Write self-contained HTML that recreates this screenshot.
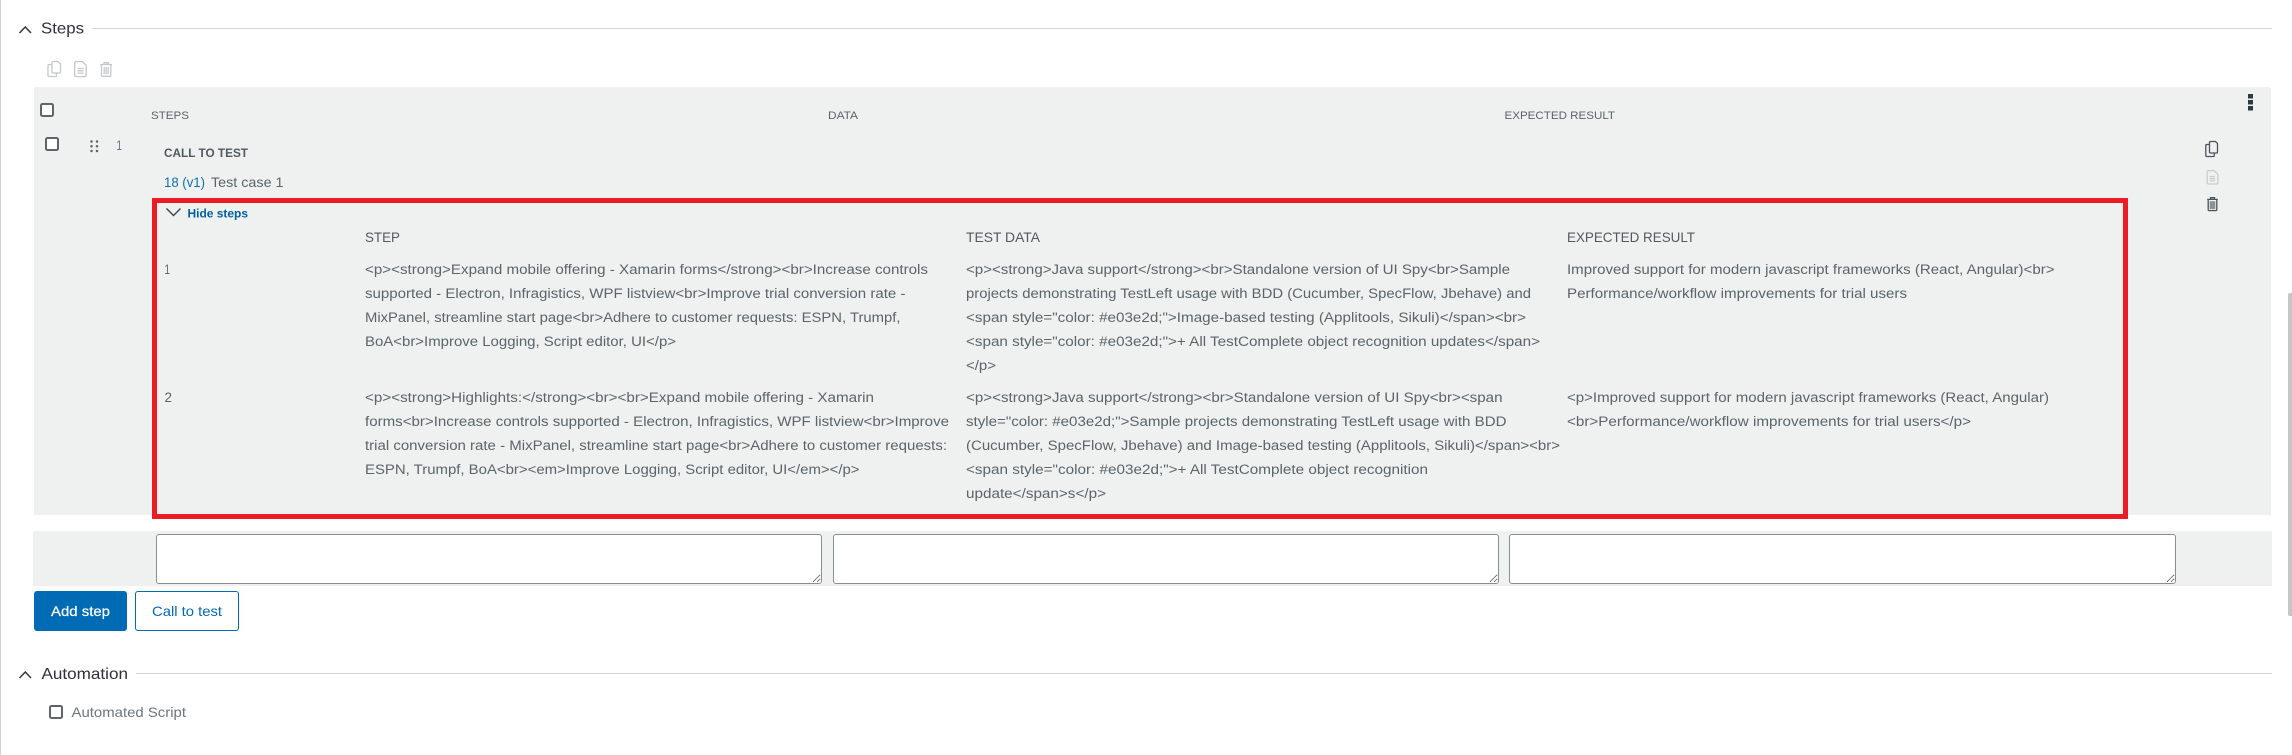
<!DOCTYPE html>
<html lang="en">
<head>
<meta charset="utf-8">
<title>Steps</title>
<style>
html,body{margin:0;padding:0;background:#fff;width:2292px;height:755px;overflow:hidden;font-family:"Liberation Sans",sans-serif}
.abs{position:absolute;box-sizing:border-box}
textarea{position:absolute;box-sizing:border-box;border:1px solid #868f94;border-bottom-width:1.5px;border-radius:3px;background:#fff;margin:0;padding:0;outline:none}
svg{position:absolute;left:0;top:0}
text{font-family:"Liberation Sans",sans-serif}
.b{font-size:13.5px;fill:#5a646a}
.h{font-size:13.6px;fill:#4f595f}
.s{font-size:11.2px;fill:#5a646a}
</style>
</head>
<body>
<div class="abs" style="left:0;top:0;width:1px;height:755px;background:#cfd2d4"></div>
<div class="abs" style="left:92px;top:28px;width:2180px;height:1px;background:#d3d6d8"></div>
<div class="abs" style="left:136px;top:673px;width:2136px;height:1px;background:#d3d6d8"></div>
<div class="abs" style="left:34px;top:87px;width:2237px;height:428px;background:#eff1f1;border-radius:2px 3px 0 0"></div>
<div class="abs" style="left:33px;top:531px;width:2239px;height:55px;background:#eff1f1"></div>
<textarea style="left:156px;top:534px;width:666px;height:50px"></textarea>
<textarea style="left:833px;top:534px;width:666px;height:50px"></textarea>
<textarea style="left:1509px;top:534px;width:667px;height:50px"></textarea>
<div class="abs" style="left:34px;top:591px;width:93px;height:40px;background:#006bb5;border-radius:3px"></div>
<div class="abs" style="left:135px;top:591px;width:104px;height:40px;background:#fff;border:1px solid #006bb5;border-radius:3px"></div>
<div class="abs" style="left:152px;top:198px;width:1976px;height:321px;border:5px solid #ed1c24"></div>
<div class="abs" style="left:2288px;top:293px;width:4px;height:323px;background:#c6c6c6;border-radius:2px 0 0 2px"></div>

<svg width="2292" height="755" viewBox="0 0 2292 755" xmlns="http://www.w3.org/2000/svg">
<!-- section chevrons -->
<path d="M19.5 33L25.3 27L31 33" fill="none" stroke="#2f3a40" stroke-width="1.5"/>
<path d="M19.5 678L25.3 672L31 678" fill="none" stroke="#2f3a40" stroke-width="1.5"/>
<text x="41" y="33.5" font-size="16" fill="#2a3338" textLength="43" lengthAdjust="spacingAndGlyphs">Steps</text>
<text x="41.5" y="679" font-size="16" fill="#2a3338" textLength="86.5" lengthAdjust="spacingAndGlyphs">Automation</text>

<!-- top icons -->
<g fill="none" stroke="#c4c8ca" stroke-width="1.3">
<g transform="translate(47,61)">
<path d="M5 1.5a1 1 0 0 1 1-1h5l2.5 2.5v8a1 1 0 0 1-1 1H6a1 1 0 0 1-1-1z"/>
<path d="M5 3.5H2a1 1 0 0 0-1 1v10a1 1 0 0 0 1 1h6.5a1 1 0 0 0 1-1V12"/>
</g>
<g transform="translate(74,61)">
<path d="M.7 2A1.5 1.5 0 0 1 2.2.6h6l4 3.5v10a1.5 1.5 0 0 1-1.5 1.5H2.200A1.5 1.5 0 0 1 .7 14.100z"/>
<path d="M3.5 7.5h6M3.5 9.8h6M3.5 12.1h6"/>
</g>
<g transform="translate(100,62)">
<path d="M.3 2.5H12M4 2.5V.7h4.300v1.800"/>
<path d="M1.500 2.500v10.800a1 1 0 0 0 1 1h7.300a1 1 0 0 0 1-1V2.500"/>
<path d="M4.200 5v7M6.200 5v7M8.200 5v7"/>
</g>
</g>

<!-- checkboxes -->
<rect x="41" y="104" width="12" height="12" rx="1.5" fill="#fff" stroke="#5b656b" stroke-width="2"/>
<rect x="46" y="138" width="12" height="12" rx="1.5" fill="#fff" stroke="#5b656b" stroke-width="2"/>
<rect x="50" y="706" width="12" height="12" rx="1.5" fill="#fff" stroke="#5b656b" stroke-width="2"/>

<!-- drag handle -->
<g fill="#5b656b">
<circle cx="91.5" cy="141.5" r="1.25"/><circle cx="97" cy="141.5" r="1.25"/>
<circle cx="91.5" cy="146.3" r="1.25"/><circle cx="97" cy="146.3" r="1.25"/>
<circle cx="91.5" cy="151" r="1.25"/><circle cx="97" cy="151" r="1.25"/>
</g>

<!-- panel header -->
<text class="s" x="151" y="119" textLength="38" lengthAdjust="spacingAndGlyphs">STEPS</text>
<text class="s" x="828" y="119" textLength="30" lengthAdjust="spacingAndGlyphs">DATA</text>
<text class="s" x="1504.5" y="119" textLength="110.5" lengthAdjust="spacingAndGlyphs">EXPECTED RESULT</text>

<!-- kebab -->
<g fill="#2f3a40">
<rect x="2248" y="94" width="5" height="4.5"/>
<rect x="2248" y="100" width="5" height="4.5"/>
<rect x="2248" y="106" width="5" height="4.5"/>
</g>

<!-- row -->
<text x="116.500" y="150" font-size="14" fill="#56758a" textLength="5.5" lengthAdjust="spacingAndGlyphs">1</text>
<text x="164" y="157" font-size="11.5" font-weight="700" fill="#4f595f" textLength="84" lengthAdjust="spacingAndGlyphs">CALL TO TEST</text>
<text x="164" y="187" font-size="14" fill="#0f6fb0" textLength="41" lengthAdjust="spacingAndGlyphs">18 (v1)</text>
<text x="211" y="187" font-size="14" fill="#5a646a" textLength="72.5" lengthAdjust="spacingAndGlyphs">Test case 1</text>

<!-- right icons -->
<g fill="none" stroke="#4a545a" stroke-width="1.3">
<g transform="translate(2205,141)">
<path d="M4.5 1.500a1 1 0 0 1 1-1h5l2 2V11a1 1 0 0 1-1 1H5.500a1 1 0 0 1-1-1z"/>
<path d="M4.5 3.500H1.800a1 1 0 0 0-1 1v10a1 1 0 0 0 1 1h6.500a1 1 0 0 0 1-1V12"/>
</g>
<g transform="translate(2206.5,170)" stroke="#c8cccd">
<path d="M.7 1.800A1.300 1.300 0 0 1 2 .6h5.500l3.800 3.400v8.700a1.300 1.300 0 0 1-1.300 1.300H2A1.300 1.300 0 0 1 .7 12.700z"/>
<path d="M3 6.500h5.500M3 8.700h5.500M3 10.900h5.500"/>
</g>
<g transform="translate(2207,197)">
<path d="M.2 2.400h10.600M3.500 2.400V.7h4v1.700"/>
<path d="M1.200 2.400v10.200a1 1 0 0 0 1 1h6.600a1 1 0 0 0 1-1V2.400"/>
<rect x="2.700" y="4.200" width="5.600" height="8" fill="#8b9296" stroke="none"/>
</g>
</g>

<!-- hide steps -->
<path d="M166.500 208.500L173.500 215.500L180.500 208.500" fill="none" stroke="#3a454b" stroke-width="1.4"/>
<text x="187.5" y="217.3" font-size="12" font-weight="700" fill="#00609f" textLength="60.5" lengthAdjust="spacingAndGlyphs">Hide steps</text>

<!-- nested headers -->
<text class="h" x="365" y="242" textLength="35" lengthAdjust="spacingAndGlyphs">STEP</text>
<text class="h" x="966" y="242" textLength="74" lengthAdjust="spacingAndGlyphs">TEST DATA</text>
<text class="h" x="1567" y="242" textLength="128" lengthAdjust="spacingAndGlyphs">EXPECTED RESULT</text>

<!-- row 1 -->
<text class="b" x="164.5" y="274" textLength="5.5" lengthAdjust="spacingAndGlyphs">1</text>
<text class="b" x="365" y="274" textLength="563" lengthAdjust="spacingAndGlyphs">&lt;p&gt;&lt;strong&gt;Expand mobile offering - Xamarin forms&lt;/strong&gt;&lt;br&gt;Increase controls</text>
<text class="b" x="365" y="298" textLength="540.5" lengthAdjust="spacingAndGlyphs">supported - Electron, Infragistics, WPF listview&lt;br&gt;Improve trial conversion rate -</text>
<text class="b" x="365" y="322" textLength="535.5" lengthAdjust="spacingAndGlyphs">MixPanel, streamline start page&lt;br&gt;Adhere to customer requests: ESPN, Trumpf,</text>
<text class="b" x="365" y="346" textLength="311" lengthAdjust="spacingAndGlyphs">BoA&lt;br&gt;Improve Logging, Script editor, UI&lt;/p&gt;</text>

<text class="b" x="966" y="274" textLength="544" lengthAdjust="spacingAndGlyphs">&lt;p&gt;&lt;strong&gt;Java support&lt;/strong&gt;&lt;br&gt;Standalone version of UI Spy&lt;br&gt;Sample</text>
<text class="b" x="966" y="298" textLength="565" lengthAdjust="spacingAndGlyphs">projects demonstrating TestLeft usage with BDD (Cucumber, SpecFlow, Jbehave) and</text>
<text class="b" x="966" y="322" textLength="560" lengthAdjust="spacingAndGlyphs">&lt;span style="color: #e03e2d;"&gt;Image-based testing (Applitools, Sikuli)&lt;/span&gt;&lt;br&gt;</text>
<text class="b" x="966" y="346" textLength="574" lengthAdjust="spacingAndGlyphs">&lt;span style="color: #e03e2d;"&gt;+ All TestComplete object recognition updates&lt;/span&gt;</text>
<text class="b" x="966" y="370" textLength="30" lengthAdjust="spacingAndGlyphs">&lt;/p&gt;</text>

<text class="b" x="1567" y="274" textLength="487.5" lengthAdjust="spacingAndGlyphs">Improved support for modern javascript frameworks (React, Angular)&lt;br&gt;</text>
<text class="b" x="1567" y="298" textLength="340" lengthAdjust="spacingAndGlyphs">Performance/workflow improvements for trial users</text>

<!-- row 2 -->
<text class="b" x="164.5" y="402" textLength="7.5" lengthAdjust="spacingAndGlyphs">2</text>
<text class="b" x="365" y="402" textLength="509" lengthAdjust="spacingAndGlyphs">&lt;p&gt;&lt;strong&gt;Highlights:&lt;/strong&gt;&lt;br&gt;&lt;br&gt;Expand mobile offering - Xamarin</text>
<text class="b" x="365" y="426" textLength="584" lengthAdjust="spacingAndGlyphs">forms&lt;br&gt;Increase controls supported - Electron, Infragistics, WPF listview&lt;br&gt;Improve</text>
<text class="b" x="365" y="450" textLength="582" lengthAdjust="spacingAndGlyphs">trial conversion rate - MixPanel, streamline start page&lt;br&gt;Adhere to customer requests:</text>
<text class="b" x="365" y="474" textLength="494.5" lengthAdjust="spacingAndGlyphs">ESPN, Trumpf, BoA&lt;br&gt;&lt;em&gt;Improve Logging, Script editor, UI&lt;/em&gt;&lt;/p&gt;</text>

<text class="b" x="966" y="402" textLength="536.5" lengthAdjust="spacingAndGlyphs">&lt;p&gt;&lt;strong&gt;Java support&lt;/strong&gt;&lt;br&gt;Standalone version of UI Spy&lt;br&gt;&lt;span</text>
<text class="b" x="966" y="426" textLength="540.5" lengthAdjust="spacingAndGlyphs">style="color: #e03e2d;"&gt;Sample projects demonstrating TestLeft usage with BDD</text>
<text class="b" x="966" y="450" textLength="594" lengthAdjust="spacingAndGlyphs">(Cucumber, SpecFlow, Jbehave) and Image-based testing (Applitools, Sikuli)&lt;/span&gt;&lt;br&gt;</text>
<text class="b" x="966" y="474" textLength="462" lengthAdjust="spacingAndGlyphs">&lt;span style="color: #e03e2d;"&gt;+ All TestComplete object recognition</text>
<text class="b" x="966" y="498" textLength="140" lengthAdjust="spacingAndGlyphs">update&lt;/span&gt;s&lt;/p&gt;</text>

<text class="b" x="1567" y="402" textLength="482" lengthAdjust="spacingAndGlyphs">&lt;p&gt;Improved support for modern javascript frameworks (React, Angular)</text>
<text class="b" x="1567" y="426" textLength="404" lengthAdjust="spacingAndGlyphs">&lt;br&gt;Performance/workflow improvements for trial users&lt;/p&gt;</text>

<!-- buttons -->
<text x="51" y="616" font-size="14" fill="#fff" stroke="#fff" stroke-width=".25" textLength="59" lengthAdjust="spacingAndGlyphs">Add step</text>
<text x="152" y="616" font-size="14" fill="#006bb5" textLength="70" lengthAdjust="spacingAndGlyphs">Call to test</text>

<!-- automated -->
<text x="71.5" y="717" font-size="14" fill="#6b757a" textLength="114.5" lengthAdjust="spacingAndGlyphs">Automated Script</text>
</svg>
</body>
</html>
